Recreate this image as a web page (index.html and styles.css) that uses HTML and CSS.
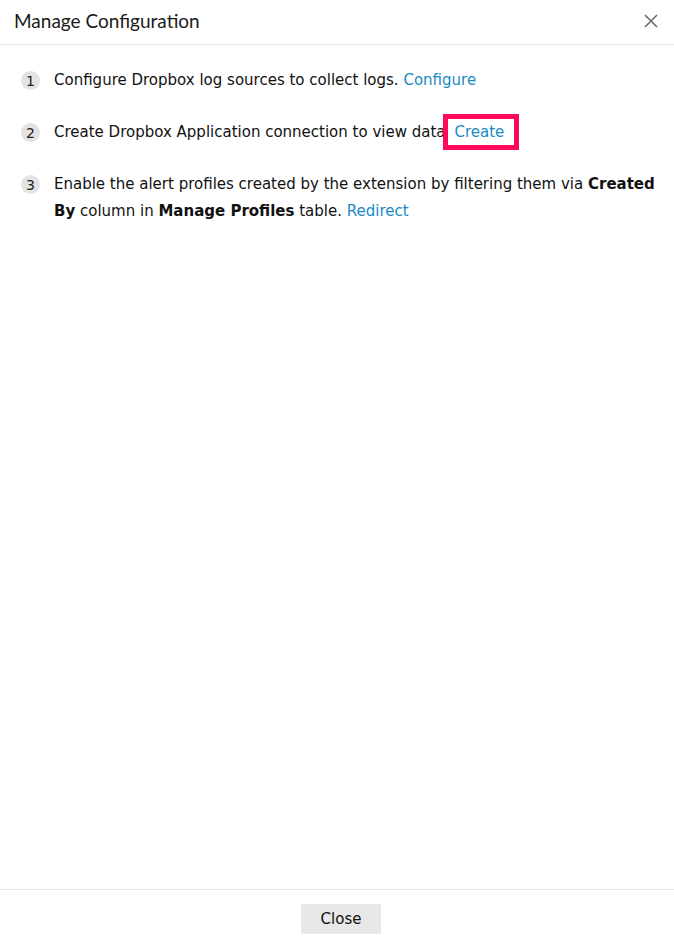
FILE: index.html
```html
<!DOCTYPE html>
<html>
<head>
<meta charset="utf-8">
<link rel="stylesheet" href="styles.css">
</head>
<body>
<div class="dialog">
  <div class="header">
    <div class="title">Manage Configuration</div>
    <svg class="close-x" width="16" height="16" viewBox="0 0 16 16"><path d="M2 2 L14 14 M14 2 L2 14" stroke="#666" stroke-width="1.5" fill="none"/></svg>
  </div>
  <div class="body">
    <div class="step">
      <span class="num">1</span>
      <div class="text">Configure Dropbox log sources to collect logs. <a class="link">Configure</a></div>
    </div>
    <div class="step">
      <span class="num">2</span>
      <div class="text">Create Dropbox Application connection to view data<span class="hl"><a class="link">Create</a></span></div>
    </div>
    <div class="step">
      <span class="num">3</span>
      <div class="text">Enable the alert profiles created by the extension by filtering them via <b>Created By</b> column in <b>Manage Profiles</b> table. <a class="link">Redirect</a></div>
    </div>
  </div>
  <div class="footer">
    <button class="btn">Close</button>
  </div>
</div>
</body>
</html>
```
FILE: styles.css
```css
html, body { margin: 0; padding: 0; background: #fff; }
.dialog { width: 674px; height: 943px; display: flex; flex-direction: column; color: #111; }
.header { height: 45px; border-bottom: 1px solid #e6e6e6; display: flex; align-items: center; justify-content: space-between; padding: 0 15px 0 14px; box-sizing: border-box; }
.title { font-family: Lato, sans-serif; font-size: 19px; color: #1a1a1a; margin-top: -3px; }
.close-x { margin-top: -2px; }
.body { flex: 1; padding: 22px 8px 0 21px; font-family: "DejaVu Sans", Verdana, sans-serif; font-size: 15px; }
.step { display: flex; align-items: flex-start; margin-bottom: 25px; }
.num { flex: none; width: 19px; height: 19px; border-radius: 50%; background: #e3e3e3; font-size: 14px; display: flex; align-items: center; justify-content: center; margin-right: 14px; margin-top: 4px; color: #222; }
.text { line-height: 27px; }
.text b { font-weight: bold; }
.link { color: #1a8ac4; }
.hl { display: inline-block; border: 5px solid #ff0a5a; padding: 0 10px 0 7px; line-height: 26px; margin: -5px 0 -5px -3px; }
.footer { height: 54px; border-top: 1px solid #e6e6e6; display: flex; justify-content: center; align-items: flex-start; padding-top: 14px; box-sizing: border-box; }
.btn { width: 80px; height: 30px; border: none; background: #e8e8e8; font-family: "DejaVu Sans", Verdana, sans-serif; font-size: 15px; color: #111; padding: 0; margin-left: 8px; }
```
